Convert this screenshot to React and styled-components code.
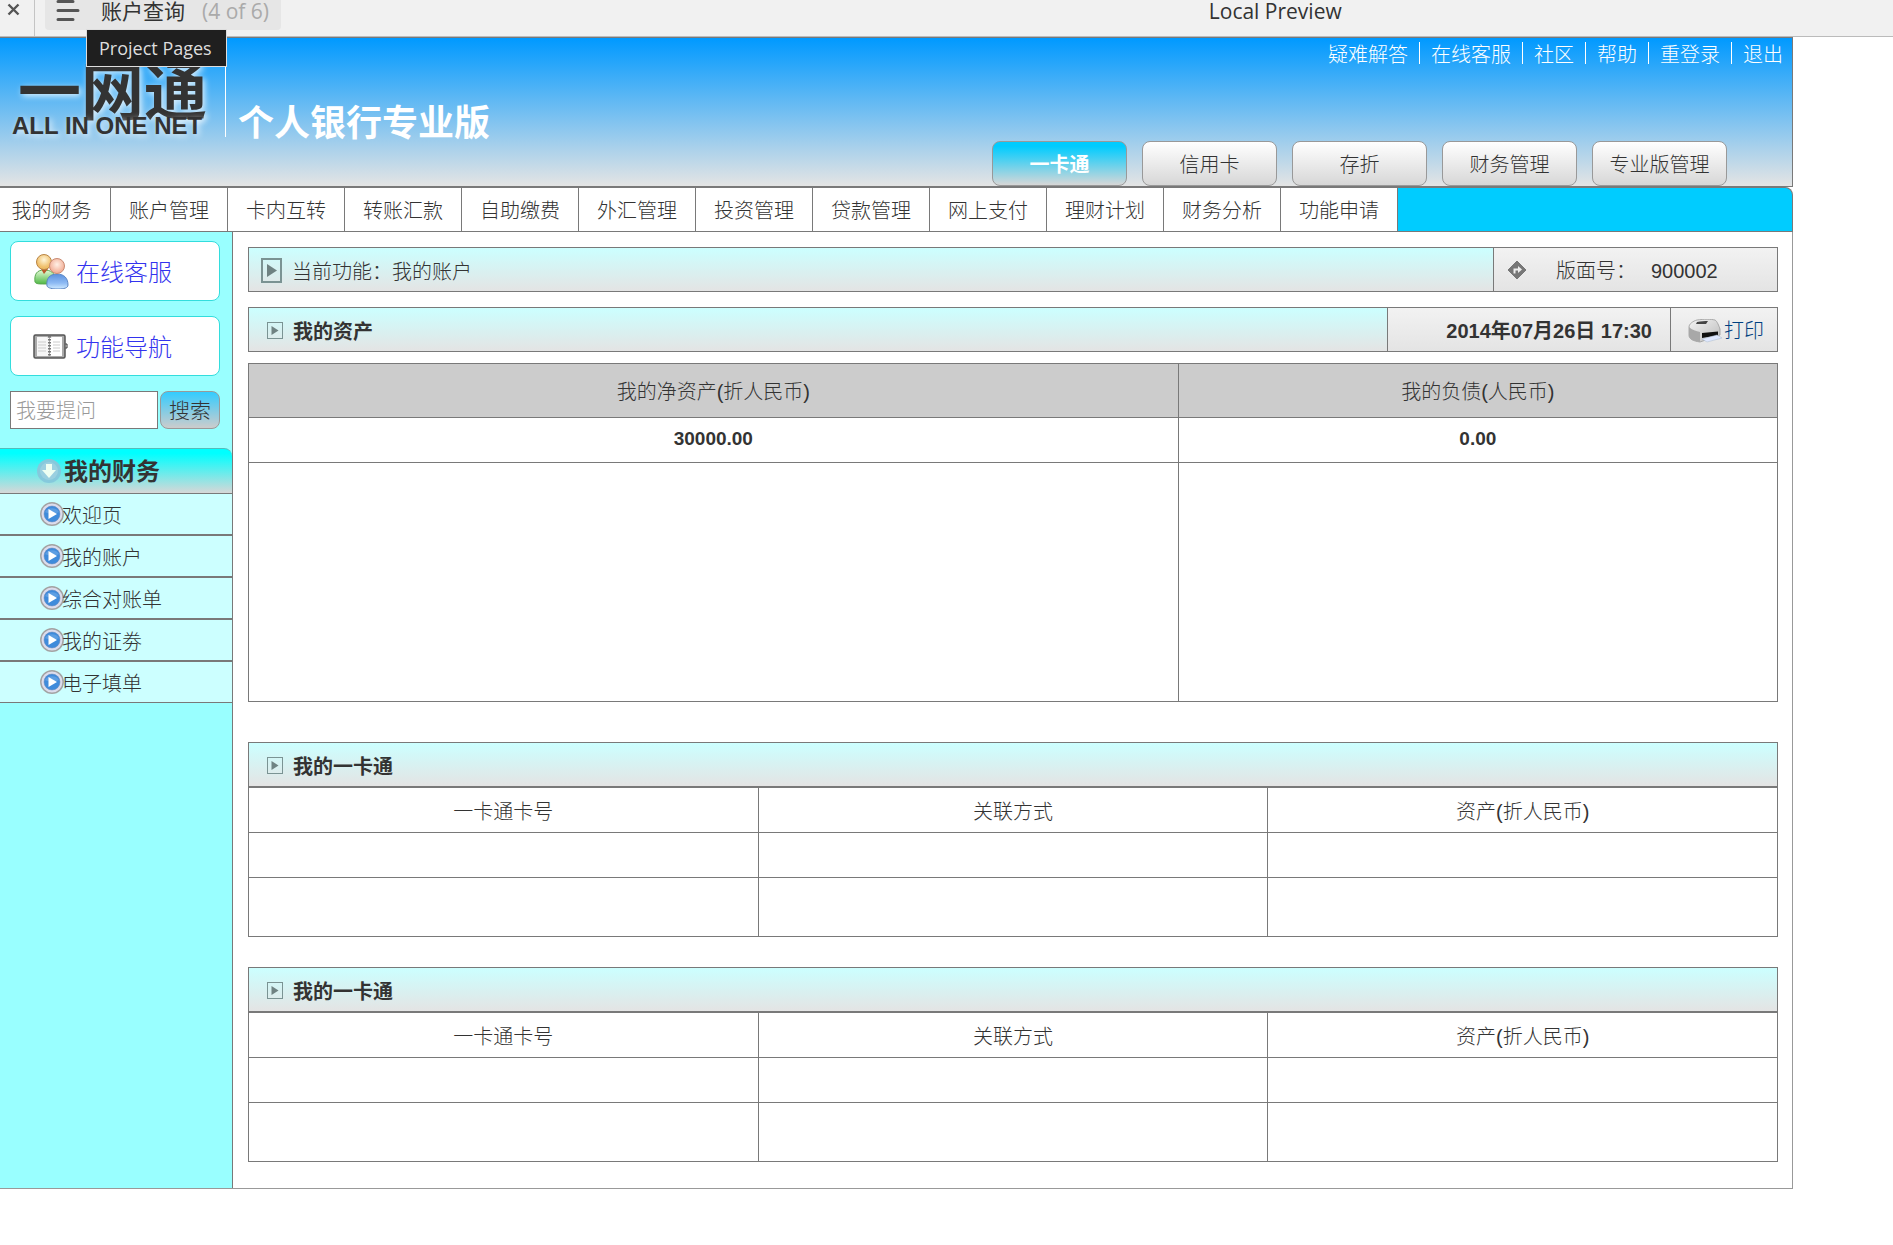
import styled, { createGlobalStyle, css } from "styled-components"

const line = "#797979";

const GlobalStyle = createGlobalStyle`
  * {
    box-sizing: border-box;
  }
  body {
    margin: 0;
    background: white;
    color: #333;
    font: 300 20px/24px "Liberation Sans", "Noto Sans CJK SC", sans-serif;
  }
  button, input {
    font: inherit;
    color: inherit;
  }
  a {
    color: inherit;
    text-decoration: none;
  }
  h1, h2, p, ul {
    margin: 0;
    padding: 0;
    font-size: inherit;
  }
  ul {
    list-style: none;
  }
  svg {
    display: block;
    flex: none;
  }
`;

/* preview bar */
const PreviewBar = styled.div`
  display: grid;
  grid-template-columns: 35px 1fr;
  height: 37px;
  background: #f1f1f1;
  border-bottom: 1px solid #bbb;
  font-family: "Open Sans", "Noto Sans CJK SC", sans-serif;
  font-weight: 400;
`;
const CloseBtn = styled.button`
  display: flex;
  padding: 3px 7px;
  border: 0;
  border-right: 1px solid #c4c4c4;
  background: none;
`;
const PreviewBody = styled.div`
  display: grid;
  grid-template-columns: 19fr auto 9fr;
  align-items: start;
  padding-left: 10px;
`;
const PagesWrap = styled.div`
  position: relative;
  justify-self: start;
`;
const PagesBtn = styled.button`
  display: flex;
  height: 30px;
  padding: 0 12px 0 11px;
  border: 0;
  border-radius: 0 0 4px 4px;
  background: #e6e6e6;
  font-size: 21px;
  line-height: 22px;
  white-space: nowrap;
  svg {
    margin-right: 21px;
  }
`;
const Count = styled.span`
  margin-left: 17px;
  color: #aaa;
`;
const Tooltip = styled.div`
  position: absolute;
  top: 29px;
  left: 41px;
  z-index: 2;
  padding: 6px 14px 6px 12px;
  border: 1px solid #ddd;
  background: #1f1f1f;
  color: #ddd;
  font-size: 18px;
  white-space: nowrap;
`;
const PreviewTitle = styled.p`
  font-size: 21px;
  line-height: 22px;
`;

/* page */
const Page = styled.div`
  margin-right: 100px;
`;
const Header = styled.header`
  display: flex;
  justify-content: space-between;
  height: 150px;
  border: 1px solid ${line};
  border-left: 0;
  background: linear-gradient(#0099ff, #e4e4e4);
`;
const Brand = styled.div`
  display: flex;
  align-items: flex-start;
  padding-top: 24px;
  white-space: nowrap;
`;
const Logo = styled.div`
  width: 225px;
  padding-left: 12px;
  font-weight: bold;
  text-shadow: 2px 2px 6px rgba(255, 255, 255, .8);
`;
const LogoName = styled.p`
  padding-left: 6px;
  font-size: 63px;
  line-height: 60px;
`;
const LogoSub = styled.p`
  font-size: 24px;
  line-height: 8px;
`;
const Title = styled.h1`
  display: flex;
  align-items: flex-end;
  height: 75px;
  padding-left: 12px;
  border-left: 1px solid white;
  color: white;
  font-size: 36px;
  line-height: 26px;
`;
const HeaderSide = styled.div`
  display: flex;
  flex-direction: column;
  justify-content: space-between;
  align-items: flex-end;
`;
const TopLinks = styled.nav`
  display: flex;
  padding: 4px 9px 0 0;
  color: white;
  line-height: 18px;
  a {
    padding-top: 4px;
    white-space: nowrap;
  }
  a + a {
    margin-left: 11px;
    padding-left: 11px;
    border-left: 1px solid white;
  }
`;
const Tabs = styled.div`
  display: flex;
  gap: 15px;
  padding-right: 65px;
`;
const Tab = styled.button`
  width: 135px;
  height: 45px;
  border: 1px solid #999;
  border-radius: 8px;
  padding: 2px 0 0;
  background: linear-gradient(white, #d7d7d7);
  ${(props) => props.$on && css`
    background: linear-gradient(#00ccff 10%, #d7d7d7);
    color: white;
    font-weight: bold;
  `}
`;
const Nav = styled.nav`
  display: flex;
  height: 45px;
  border: 1px solid ${line};
  border-left: 0;
  border-radius: 0 8px 0 0;
  background: #00ccff;
  a {
    display: flex;
    align-items: center;
    justify-content: center;
    width: 117px;
    padding-top: 3px;
    border-right: 1px solid ${line};
    background: white;
  }
  a:first-child {
    width: 111px;
    padding-right: 7px;
  }
`;
const Columns = styled.div`
  display: flex;
  border: 1px solid #999;
  border-width: 0 1px 1px 0;
`;

/* side bar */
const Side = styled.aside`
  flex: none;
  width: 233px;
  padding-top: 9px;
  border-right: 1px solid ${line};
  background: #99ffff;
`;
const SideCard = styled.a`
  display: flex;
  align-items: center;
  gap: 7px;
  height: 60px;
  margin: 0 12px 15px 10px;
  padding: 4px 0 0 22px;
  border: 1px solid #33dddd;
  border-radius: 8px;
  background: white;
  color: #3333ee;
  font-size: 24px;
  svg {
    margin-bottom: 4px;
  }
`;
const Search = styled.form`
  display: flex;
  gap: 2px;
  height: 38px;
  margin: 0 12px 19px 10px;
`;
const SearchInput = styled.input`
  flex: 1;
  min-width: 0;
  padding: 2px 5px 0;
  border: 1px solid ${line};
  background: white;
  &::placeholder {
    color: #999;
    opacity: 1;
  }
`;
const SearchBtn = styled.button`
  width: 60px;
  padding: 2px 0 0;
  border: 1px solid #999;
  border-radius: 8px;
  background: linear-gradient(#33ccff, #cccccc);
  font-size: 21px;
`;
const MenuTitle = styled.h2`
  display: flex;
  align-items: center;
  gap: 3px;
  height: 45px;
  padding: 2px 0 0 37px;
  border-top: 1px solid #55bbbb;
  border-radius: 0 8px 0 0;
  background: linear-gradient(#00ffff 10%, #d7d7d7);
  font-size: 24px;
  svg {
    margin-bottom: 2px;
  }
`;
const MenuItem = styled.a`
  display: flex;
  align-items: center;
  height: 42px;
  padding: 3px 0 0 40px;
  border: 1px solid ${line};
  border-width: 1px 0;
  background: #ccffff;
  svg {
    margin: 0 -2px 4px 0;
  }
`;

/* content */
const Main = styled.main`
  flex: 1;
  padding: 15px 14px 26px 15px;
`;
const Bar = styled.div`
  display: flex;
  height: 45px;
  margin-bottom: ${(props) => props.$gap || 0}px;
  border: 1px solid ${line};
  background: linear-gradient(#ccffff, #e4e4e4);
`;
const BarTitle = styled.h2`
  display: flex;
  flex: 1;
  align-items: center;
  padding-top: 4px;
  font-weight: ${(props) => (props.$plain ? "inherit" : "bold")};
  svg {
    margin: ${(props) => (props.$plain ? "0 10px 2px 12px" : "0 10px 2px 18px")};
  }
`;
const BarCell = styled.div`
  display: flex;
  align-items: center;
  width: ${(props) => props.$width}px;
  padding-top: 3px;
  border-left: 1px solid ${line};
  background: linear-gradient(#f2f2f2, #e4e4e4);
`;
const PageNo = styled(BarCell)`
  padding-left: 13px;
  svg {
    margin: 0 29px 3px 0;
  }
  span {
    margin-left: 15px;
  }
`;
const DateCell = styled(BarCell)`
  justify-content: flex-end;
  padding-right: 18px;
  font-weight: bold;
`;
const Print = styled.a`
  display: flex;
  align-items: center;
  gap: 2px;
  padding-left: 17px;
  color: #004080;
`;
const Table = styled.table`
  width: 100%;
  margin-bottom: ${(props) => props.$gap || 0}px;
  border-collapse: collapse;
  table-layout: fixed;
  th, td {
    height: 45px;
    padding: 0;
    border: 1px solid ${line};
    font-weight: inherit;
    text-align: center;
  }
  th {
    padding-top: 3px;
  }
`;
const AssetTable = styled(Table)`
  th {
    height: 54px;
    background: #ccc;
  }
  th:first-child {
    width: 60.8%;
  }
  td {
    padding-bottom: 3px;
    font-size: 19px;
    font-weight: bold;
  }
  tr:last-child td {
    height: 239px;
  }
`;
const CardTable = styled(Table)`
  tr:last-child td {
    height: 59px;
  }
`;

const CloseIcon = () => (
  <svg width="14" height="14" viewBox="0 0 14 14" stroke="#555" strokeWidth="2.4">
    <path d="M1.5 1.5l10 10M11.5 1.5l-10 10" />
  </svg>
);
const PagesIcon = () => (
  <svg width="24" height="23" viewBox="0 0 24 23" stroke="#555" strokeWidth="3" strokeLinecap="round">
    <path d="M2 1.5h15M2 10.5h20M2 19.500h15" />
  </svg>
);
const PeopleIcon = () => (
  <svg width="36" height="36" viewBox="0 0 36 36">
    <defs>
      <linearGradient id="green" x2="0" y2="1">
        <stop stopColor="#e4fbd8" />
        <stop offset="1" stopColor="#4fb845" />
      </linearGradient>
      <linearGradient id="blue" x2="0" y2="1">
        <stop stopColor="#5b90dc" />
        <stop offset=".6" stopColor="#8dbaf4" />
        <stop offset="1" stopColor="#cfeaff" />
      </linearGradient>
      <radialGradient id="gold" cx=".5" cy=".35">
        <stop stopColor="#fff6da" />
        <stop offset="1" stopColor="#f0be68" />
      </radialGradient>
      <radialGradient id="rose" cx=".5" cy=".4">
        <stop stopColor="#fff0e6" />
        <stop offset="1" stopColor="#f3b39c" />
      </radialGradient>
    </defs>
    <path d="M2 29C1 21 4 17 11 17s11 3 11 9c0 4-4 5-10 5S3 31 2 29z" fill="url(#green)" stroke="#5aa850" />
    <path d="M8 16l3 5 4-5z" fill="#b85a2c" />
    <circle cx="11" cy="9" r="7.500" fill="url(#gold)" stroke="#b98545" />
    <path d="M14 33c-1-8 3-12 10-12s11 4 11 11c0 3-4 4-10 4s-10-1-11-3z" fill="url(#blue)" stroke="#5b86c4" />
    <circle cx="24" cy="13" r="7.500" fill="url(#rose)" stroke="#c98a72" />
  </svg>
);
const BookIcon = () => (
  <svg width="36" height="27" viewBox="0 0 36 27" fill="none">
    <rect x="1" y="2" width="31" height="23" rx="1.500" fill="#aaa" stroke="#555" strokeWidth="1.500" />
    <path d="M4 4h10l2 1v18H4z" fill="#f6f6f6" />
    <path d="M29 4H19l-2 1v18h12z" fill="#fff" />
    <path d="M5 9h8M5 12h8M5 15h8M5 18h8M20 9h7M20 12h7M20 15h7M20 18h7" stroke="#ccc" />
    <path d="M16.500 3v21" stroke="#777" strokeWidth="3" strokeDasharray="1.500 1.500" />
    <path d="M32.500 11h1.500v4h-1.500" stroke="#333" />
  </svg>
);
const DownIcon = () => (
  <svg width="24" height="24" viewBox="0 0 24 24">
    <circle cx="12" cy="12" r="12" fill="#85c9dc" />
    <circle cx="12" cy="12" r="9" fill="#9ad0e0" />
    <path d="M9 5h6v6h4l-7 8-7-8h4z" fill="#edfff2" />
  </svg>
);
const PlayIcon = () => (
  <svg width="24" height="24" viewBox="0 0 24 24">
    <circle cx="12" cy="12" r="11.200" fill="#dcdcec" stroke="#a3a3a3" strokeWidth="1.500" />
    <circle cx="12" cy="12" r="8" fill="#3f8bdb" stroke="#6688bb" strokeWidth=".5" />
    <path d="M5 10a7.500 6 0 0 1 14 0c-4 2-10 2-14 0z" fill="#7bb2ea" opacity=".5" />
    <path d="M8.500 7l8.500 5-8.500 5z" fill="#fff" />
  </svg>
);
const BoxIcon = ({ big }) => (
  <svg width={big ? 21 : 16} height={big ? 25 : 17} viewBox={big ? "0 0 21 25" : "0 0 16 17"}>
    {big ? (
      <>
        <rect x="1" y="1" width="19" height="23" fill="none" stroke="#7b9393" strokeWidth="2" />
        <path d="M6 6l10 6.500-10 6.500z" fill="#6f8282" />
      </>
    ) : (
      <>
        <rect x=".5" y=".5" width="15" height="16" fill="none" stroke="#7b9393" />
        <path d="M4.500 4l7 4.500-7 4.500z" fill="#6f8282" />
      </>
    )}
  </svg>
);
const TurnIcon = () => (
  <svg width="20" height="20" viewBox="0 0 20 20">
    <path d="M10 1l9 9-9 9-9-9z" fill="#777" stroke="#777" strokeLinejoin="round" />
    <path d="M7.500 13.500V9.500H12" fill="none" stroke="#eee" strokeWidth="2" />
    <path d="M11 6l4 3.500-4 3.500z" fill="#eee" />
  </svg>
);
const PrinterIcon = () => (
  <svg width="34" height="24" viewBox="0 0 34 24">
    <defs>
      <linearGradient id="shell" x2="1" y2="1">
        <stop stopColor="#f4f4f4" />
        <stop offset="1" stopColor="#bbb" />
      </linearGradient>
    </defs>
    <path d="M1 8c0-3 4-6 8-7 7-1 14-1 18 0 2 1 4 6 5 9v6l-20 7C5 22 1 20 1 16z" fill="url(#shell)" stroke="#999" strokeWidth=".8" />
    <path d="M1 8c3 3 7 4 11 5v10C5 22 1 20 1 16z" fill="#a8a8a8" />
    <path d="M9 3c4-1 8-1 11-1l-2 3H8z" fill="#444" />
    <path d="M14 14l16-1.500v4L14 19z" fill="#111" />
    <path d="M14 20l15-4 5 3-15 4z" fill="#dfe8ff" stroke="#abc" strokeWidth=".5" />
  </svg>
);

const topLinks = ["疑难解答", "在线客服", "社区", "帮助", "重登录", "退出"];
const tabs = ["一卡通", "信用卡", "存折", "财务管理", "专业版管理"];
const navs = [
  "我的财务", "账户管理", "卡内互转", "转账汇款", "自助缴费", "外汇管理",
  "投资管理", "贷款管理", "网上支付", "理财计划", "财务分析", "功能申请",
];
const menus = ["欢迎页", "我的账户", "综合对账单", "我的证劵", "电子填单"];

function CardSection({ gap }) {
  return (
    <section>
      <Bar>
        <BarTitle><BoxIcon />我的一卡通</BarTitle>
      </Bar>
      <CardTable $gap={gap}>
        <thead>
          <tr>
            <th>一卡通卡号</th>
            <th>关联方式</th>
            <th>资产(折人民币)</th>
          </tr>
        </thead>
        <tbody>
          <tr><td /><td /><td /></tr>
          <tr><td /><td /><td /></tr>
        </tbody>
      </CardTable>
    </section>
  )
}

function App() {

  return (
    <>
      <GlobalStyle />
      <PreviewBar>
        <CloseBtn type="button" aria-label="Close"><CloseIcon /></CloseBtn>
        <PreviewBody>
          <PagesWrap>
            <PagesBtn type="button">
              <PagesIcon />
              账户查询
              <Count>(4 of 6)</Count>
            </PagesBtn>
            <Tooltip role="tooltip">Project Pages</Tooltip>
          </PagesWrap>
          <PreviewTitle>Local Preview</PreviewTitle>
        </PreviewBody>
      </PreviewBar>
      <Page>
        <Header>
          <Brand>
            <Logo>
              <LogoName>一网通</LogoName>
              <LogoSub>ALL IN ONE NET</LogoSub>
            </Logo>
            <Title>个人银行专业版</Title>
          </Brand>
          <HeaderSide>
            <TopLinks>
              {topLinks.map((name) => <a href="#none" key={name}>{name}</a>)}
            </TopLinks>
            <Tabs>
              {tabs.map((name, i) => <Tab type="button" key={name} $on={i === 0}>{name}</Tab>)}
            </Tabs>
          </HeaderSide>
        </Header>
        <Nav>
          {navs.map((name) => <a href="#none" key={name}>{name}</a>)}
        </Nav>
        <Columns>
          <Side>
            <SideCard href="#none"><PeopleIcon />在线客服</SideCard>
            <SideCard href="#none"><BookIcon />功能导航</SideCard>
            <Search>
              <SearchInput placeholder="我要提问" aria-label="我要提问" />
              <SearchBtn type="button">搜索</SearchBtn>
            </Search>
            <MenuTitle><DownIcon />我的财务</MenuTitle>
            <ul>
              {menus.map((name) => (
                <li key={name}>
                  <MenuItem href="#none"><PlayIcon />{name}</MenuItem>
                </li>
              ))}
            </ul>
          </Side>
          <Main>
            <Bar $gap={15}>
              <BarTitle $plain><BoxIcon big />当前功能：我的账户</BarTitle>
              <PageNo $width={284}><TurnIcon />版面号：<span>900002</span></PageNo>
            </Bar>
            <Bar $gap={11}>
              <BarTitle><BoxIcon />我的资产</BarTitle>
              <DateCell $width={283}>2014年07月26日 17:30</DateCell>
              <BarCell $width={107}>
                <Print href="#none"><PrinterIcon />打印</Print>
              </BarCell>
            </Bar>
            <AssetTable $gap={40}>
              <thead>
                <tr>
                  <th>我的净资产(折人民币)</th>
                  <th>我的负债(人民币)</th>
                </tr>
              </thead>
              <tbody>
                <tr><td>30000.00</td><td>0.00</td></tr>
                <tr><td /><td /></tr>
              </tbody>
            </AssetTable>
            <CardSection gap={30} />
            <CardSection />
          </Main>
        </Columns>
      </Page>
    </>
  )
}

export default App
